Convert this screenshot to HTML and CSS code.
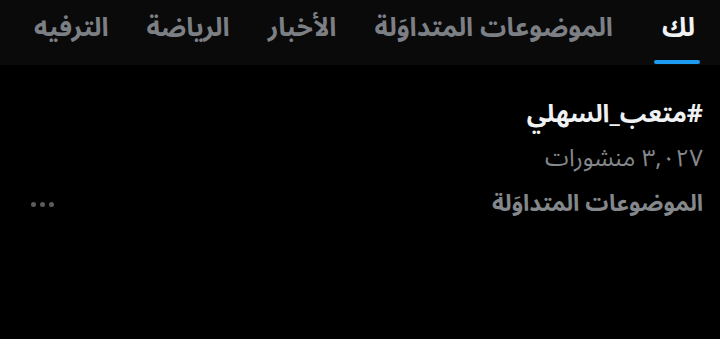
FILE: index.html
```html
<!DOCTYPE html>
<html lang="ar" dir="rtl">
<head>
<meta charset="utf-8">
<link rel="stylesheet" href="styles.css">
</head>
<body>
<nav class="tabs">
  <div class="tab active"><span class="label">لك</span><span class="bar"></span></div>
  <div class="tab"><span class="label">الموضوعات المتداوَلة</span></div>
  <div class="tab"><span class="label">الأخبار</span></div>
  <div class="tab"><span class="label">الرياضة</span></div>
  <div class="tab"><span class="label">الترفيه</span></div>
</nav>
<section class="trend">
  <div class="trend-body">
    <div class="tag">#متعب_السهلي</div>
    <div class="count">٣,٠٢٧ منشورات</div>
    <div class="cat">الموضوعات المتداوَلة</div>
  </div>
  <div class="more"><span></span><span></span><span></span></div>
</section>
</body>
</html>
```
FILE: styles.css
```css
html, body { margin: 0; padding: 0; background: #000; }
body {
  width: 720px; height: 339px; overflow: hidden;
  font-family: "Noto Sans Arabic", "DejaVu Sans", sans-serif;
}
.tabs {
  display: flex;
  height: 65px;
  background: #0a0a0b;
  padding-right: 6px;
}
.tab {
  position: relative;
  display: flex; align-items: center;
  height: 54px;
  padding: 0 19px;
  color: #7c7f84;
  font-size: 26px; font-weight: bold;
  white-space: nowrap;
}
.tab.active { color: #f2f3f4; padding-left: 30px; }
.tab .bar {
  position: absolute; bottom: -10px; right: 14px; left: 22px;
  height: 4px; border-radius: 2px; background: #1d9bf0;
}
.trend {
  display: flex; justify-content: space-between; align-items: flex-end;
  padding: 26px 17px 0 31px;
}
.tag { color: #eff1f3; font-size: 25px; font-weight: bold; line-height: 46px; }
.count { color: #84878b; font-size: 24px; line-height: 44px; }
.cat { color: #84878b; font-size: 23px; font-weight: bold; line-height: 46px; }
.more { display: flex; gap: 4px; padding-bottom: 20px; }
.more span { width: 5px; height: 5px; border-radius: 50%; background: #5b5c5e; }
```
